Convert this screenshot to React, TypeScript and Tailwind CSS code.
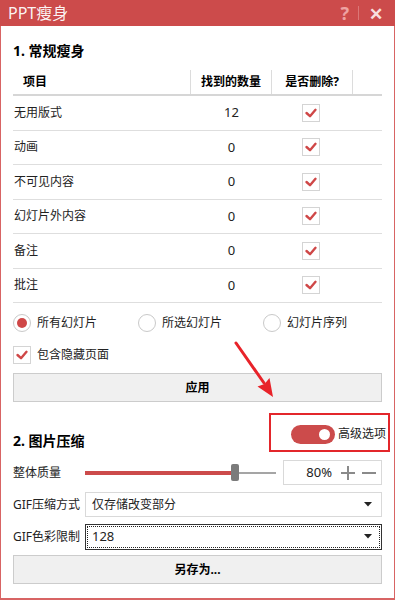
import React from "react";

const FONT = { fontFamily: "'Noto Sans', 'Noto Sans CJK SC', sans-serif" };

function Check() {
  return (
    <div className="w-[18px] h-[18px] shrink-0 border border-[#d4d4d4] bg-white flex items-center justify-center">
      <svg width="14" height="14" viewBox="0 0 14 14">
        <polyline points="2.5,7 6,10.2 11.5,3.8" fill="none" stroke="#cf4747" strokeWidth="2.4" strokeLinecap="round" strokeLinejoin="round" />
      </svg>
    </div>
  );
}

function Radio({ on }: { on?: boolean }) {
  return (
    <div className="w-[18px] h-[18px] shrink-0 rounded-full border border-[#c9c9c9] bg-white flex items-center justify-center">
      {on && <div className="w-[10px] h-[10px] rounded-full bg-[#cf4747]" />}
    </div>
  );
}

function Caret() {
  return (
    <svg width="8" height="5" viewBox="0 0 8 5">
      <polygon points="0,0 8,0 4,4.5" fill="#222" />
    </svg>
  );
}

const rows: [string, string][] = [
  ["无用版式", "12"],
  ["动画", "0"],
  ["不可见内容", "0"],
  ["幻灯片外内容", "0"],
  ["备注", "0"],
  ["批注", "0"],
];

export default function App() {
  return (
    <div className="relative w-[395px] h-[600px] bg-white text-[12px] text-[#222] overflow-hidden" style={FONT}>
      {/* Title bar */}
      <div className="h-[26px] bg-[#cc4b4b] flex items-center pl-[8px] pr-[12px]">
        <span className="text-[16px] text-white/95 leading-none">PPT瘦身</span>
        <div className="ml-auto flex items-center">
          <span className="text-[18px] font-bold text-[#eea3a3] leading-none">?</span>
          <span className="ml-[9px] w-px h-[14px] bg-[#db7777]" />
          <span className="ml-[10px] text-[17px] font-bold text-[#f7dede] leading-none">✕</span>
        </div>
      </div>

      {/* Body */}
      <div className="h-[574px] border-x border-b-2 border-[#d86464] px-[12px] flex flex-col">
        <div className="pt-[15px] text-[14px] font-bold leading-[20px] text-black">1. 常规瘦身</div>

        {/* Table */}
        <div className="mt-[9px]">
          <div className="flex h-[26px] border-b-2 border-[#d6d6d6] font-bold text-black">
            <div className="w-[178px] pl-[10px] flex items-center border-r border-[#dcdcdc]">项目</div>
            <div className="w-[81px] flex items-center justify-center border-r border-[#dcdcdc]">找到的数量</div>
            <div className="w-[81px] flex items-center justify-center border-r border-[#dcdcdc]">是否删除?</div>
            <div className="flex-1" />
          </div>
          {rows.map(([name, n]) => (
            <div key={name} className="flex h-[34.5px] border-b border-[#dedede] items-center">
              <div className="w-[178px] pl-[1px]">{name}</div>
              <div className="w-[81px] text-center text-[13px]">{n}</div>
              <div className="w-[81px] flex justify-center pr-[4px]">
                <Check />
              </div>
            </div>
          ))}
        </div>

        {/* Radio row */}
        <div className="mt-[10px] h-[20px] flex items-center">
          <div className="w-[125px] flex items-center gap-[6px]">
            <Radio on />
            <span>所有幻灯片</span>
          </div>
          <div className="w-[125px] flex items-center gap-[6px]">
            <Radio />
            <span>所选幻灯片</span>
          </div>
          <div className="flex items-center gap-[6px]">
            <Radio />
            <span>幻灯片序列</span>
          </div>
        </div>

        <div className="mt-[12px] h-[20px] flex items-center gap-[6px]">
          <Check />
          <span>包含隐藏页面</span>
        </div>

        <div className="mt-[8px] h-[29px] bg-[#f0f0f0] border border-[#cccccc] flex items-center justify-center font-bold text-black">
          应用
        </div>

        {/* Section 2 header */}
        <div className="mt-[11px] flex items-end justify-between">
          <div className="text-[14px] font-bold leading-[20px] text-black mb-[1px]">2. 图片压缩</div>
          <div className="-mr-[8px] w-[121px] h-[39px] border-2 border-[#e3262b] flex items-center pl-[20px] pt-[3px] whitespace-nowrap">
            <div className="w-[44px] h-[19px] shrink-0 rounded-full bg-[#cc4b4b] flex items-center justify-end pr-[5px]">
              <div className="w-[11px] h-[11px] rounded-full bg-white" />
            </div>
            <span className="ml-[3px] text-[12px]">高级选项</span>
          </div>
        </div>

        {/* Quality slider */}
        <div className="mt-[8px] h-[25px] flex items-center">
          <span className="w-[72px]">整体质量</span>
          <div className="w-[191px] h-[20px] flex items-center">
            <div className="w-[146px] h-[4px] bg-[#cc4b4b]" />
            <div className="w-[8px] h-[17px] rounded-[2px] bg-[#7b7b7b]" />
            <div className="flex-1 h-[2px] bg-[#a5a5a5]" />
          </div>
          <div className="ml-[7px] flex-1 h-[25px] border border-[#d9d9d9] flex items-center justify-end pr-[5px]">
            <span className="text-[13px]">80%</span>
            <div className="ml-[9px] relative w-[14px] h-[14px]">
              <div className="absolute left-0 top-[6px] w-[14px] h-[2px] bg-[#8a8a8a]" />
              <div className="absolute left-[6px] top-0 w-[2px] h-[14px] bg-[#8a8a8a]" />
            </div>
            <div className="ml-[7px] w-[14px] h-[2px] bg-[#8a8a8a]" />
          </div>
        </div>

        <div className="mt-[7px] h-[25px] flex items-center">
          <span className="w-[72px]">GIF压缩方式</span>
          <div className="flex-1 h-[25px] border border-[#d9d9d9] flex items-center pl-[6px] pr-[9px]">
            <span>仅存储改变部分</span>
            <span className="ml-auto"><Caret /></span>
          </div>
        </div>

        <div className="mt-[7px] h-[25px] flex items-center">
          <span className="w-[72px]">GIF色彩限制</span>
          <div className="flex-1 h-[26px] border border-[#333] p-[1px]">
            <div className="h-full border border-dotted border-[#222] flex items-center pl-[4px] pr-[7px]">
              <span className="text-[13px]">128</span>
              <span className="ml-auto"><Caret /></span>
            </div>
          </div>
        </div>

        <div className="mt-[6px] h-[29px] bg-[#f0f0f0] border border-[#cccccc] flex items-center justify-center font-bold text-black">
          另存为...
        </div>
      </div>

      {/* Annotation arrow */}
      <svg className="absolute left-0 top-0 pointer-events-none" width="395" height="600" viewBox="0 0 395 600">
        <line x1="236" y1="343" x2="264" y2="383" stroke="#e8232a" strokeWidth="3" strokeLinecap="round" />
        <polygon points="273,397 257.5,386.5 264.5,384 269.5,378" fill="#e8232a" />
      </svg>
    </div>
  );
}
